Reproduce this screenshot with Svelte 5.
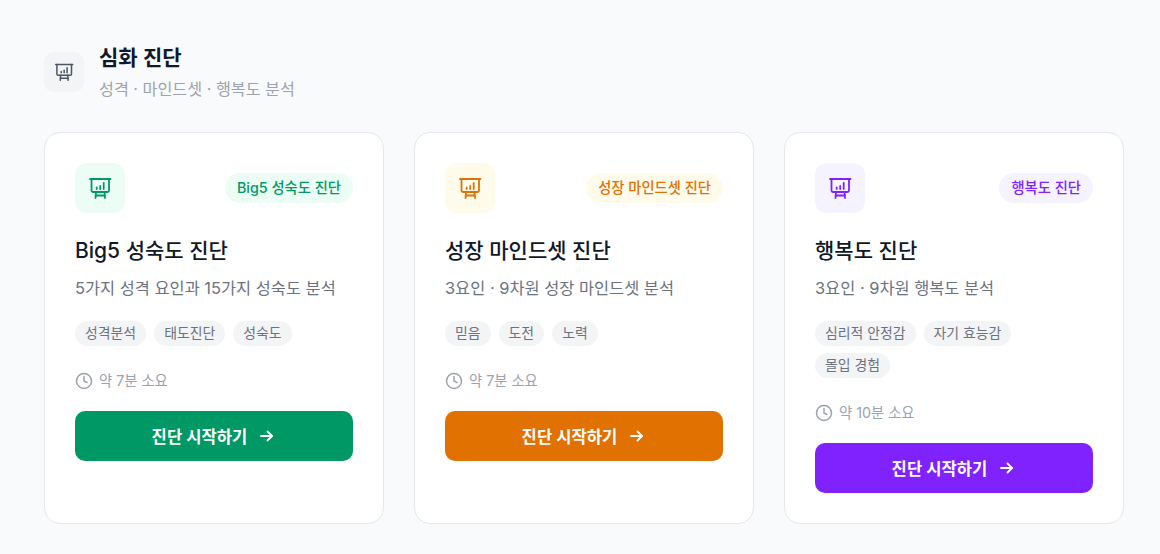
<script>
  const cards = [
    {
      theme: 'green',
      badge: 'Big5 성숙도 진단',
      title: 'Big5 성숙도 진단',
      desc: '5가지 성격 요인과 15가지 성숙도 분석',
      tags: ['성격분석', '태도진단', '성숙도'],
      time: '약 7분 소요'
    },
    {
      theme: 'orange',
      badge: '성장 마인드셋 진단',
      title: '성장 마인드셋 진단',
      desc: '3요인 · 9차원 성장 마인드셋 분석',
      tags: ['믿음', '도전', '노력'],
      time: '약 7분 소요'
    },
    {
      theme: 'purple',
      badge: '행복도 진단',
      title: '행복도 진단',
      desc: '3요인 · 9차원 행복도 분석',
      tags: ['심리적 안정감', '자기 효능감', '몰입 경험'],
      time: '약 10분 소요'
    }
  ];
</script>

{#snippet boardIcon()}
  <svg width="20" height="20" viewBox="0 0 24 24" fill="none" stroke="currentColor" stroke-width="1.8" stroke-linecap="round" stroke-linejoin="round">
    <path d="M2 3h20.5" />
    <path d="M3.5 3v11.5A1.5 1.5 0 0 0 5 16h14.5a1.5 1.5 0 0 0 1.5-1.5V3" />
    <path d="M7.5 22l.5-6" />
    <path d="M17 22l-.5-6" />
    <path d="M7.7 19.5h9" />
    <path d="M8.7 13v-1.5" />
    <path d="M12.2 13v-3" />
    <path d="M15.7 13V7" />
  </svg>
{/snippet}

<div class="page">
  <header class="head">
    <div class="head-icon">{@render boardIcon()}</div>
    <div class="head-text">
      <h2>심화 진단</h2>
      <p>성격 · 마인드셋 · 행복도 분석</p>
    </div>
  </header>

  <div class="grid">
    {#each cards as card}
      <article class="card {card.theme}">
        <div class="top">
          <div class="icon">{@render boardIcon()}</div>
          <span class="badge">{card.badge}</span>
        </div>
        <h3>{card.title}</h3>
        <p class="desc">{card.desc}</p>
        <div class="tags">
          {#each card.tags as tag}
            <span class="tag">{tag}</span>
          {/each}
        </div>
        <div class="time">
          <svg width="18" height="18" viewBox="0 0 24 24" fill="none" stroke="currentColor" stroke-width="2" stroke-linecap="round" stroke-linejoin="round">
            <circle cx="12" cy="12" r="10" />
            <path d="M12 6v6l4 2" />
          </svg>
          <span>{card.time}</span>
        </div>
        <button class="start">
          <span>진단 시작하기</span>
          <svg width="16" height="16" viewBox="0 0 16 16" fill="none" stroke="currentColor" stroke-width="1.8" stroke-linecap="round" stroke-linejoin="round">
            <path d="M1 8h11" />
            <path d="M7.5 3.5L12 8l-4.5 4.5" />
          </svg>
        </button>
      </article>
    {/each}
  </div>
</div>

<style>
  :global(body) {
    background: #f9fafb;
  }
  .page {
    height: 554px;
    box-sizing: border-box;
    padding: 43px 36px 30px 44px;
    background: #f9fafb;
    font-family: Inter, "Noto Sans CJK KR", sans-serif;
    color: #111827;
  }
  .head {
    display: flex;
    align-items: flex-start;
    gap: 15px;
    height: 57px;
    margin-bottom: 32px;
  }
  .head-icon {
    width: 40px;
    height: 40px;
    border-radius: 10px;
    background: #f3f4f6;
    color: #4b5563;
    display: flex;
    align-items: center;
    justify-content: center;
    margin-top: 9px;
  }
  h2 {
    margin: 0;
    font-size: 21px;
    line-height: 30px;
    font-weight: 600;
  }
  .head-text p {
    margin: 3px 0 0;
    font-size: 16.2px;
    line-height: 26px;
    color: #9ca3af;
  }
  .grid {
    display: grid;
    grid-template-columns: repeat(3, 340px);
    gap: 30px;
  }
  .card {
    box-sizing: border-box;
    height: 392px;
    padding: 30px;
    background: #fff;
    border: 1px solid #e5e7eb;
    border-radius: 16px;
  }
  .green { --main: #009966; --soft: #ecfdf5; }
  .orange { --main: #e17100; --soft: #fffbeb; }
  .purple { --main: #7f22fe; --soft: #f5f3ff; }
  .top {
    display: flex;
    align-items: center;
    justify-content: space-between;
    margin-bottom: 20px;
  }
  .icon {
    width: 50px;
    height: 50px;
    border-radius: 12px;
    background: var(--soft);
    color: var(--main);
    display: flex;
    align-items: center;
    justify-content: center;
  }
  .icon svg {
    width: 24px;
    height: 24px;
  }
  .badge {
    padding: 0 12px;
    height: 30px;
    line-height: 30px;
    border-radius: 15px;
    background: var(--soft);
    color: var(--main);
    font-size: 14.3px;
    font-weight: 500;
  }
  h3 {
    margin: 0 0 7px;
    font-size: 21px;
    line-height: 35px;
    font-weight: 500;
  }
  .desc {
    margin: 0 0 20px;
    font-size: 16.4px;
    line-height: 26px;
    color: #6b7280;
  }
  .tags {
    display: flex;
    flex-wrap: wrap;
    gap: 7px 8px;
    margin-bottom: 24px;
  }
  .tag {
    padding: 0 10px;
    height: 25px;
    line-height: 25px;
    border-radius: 13px;
    background: #f3f4f6;
    color: #6b7280;
    font-size: 13.9px;
  }
  .time {
    display: flex;
    align-items: center;
    gap: 6px;
    height: 18px;
    margin-bottom: 23px;
    color: #9ca3af;
    font-size: 14.3px;
  }
  .time svg {
    margin-top: 3px;
  }
  .start {
    width: 100%;
    height: 50px;
    border: none;
    border-radius: 10px;
    background: var(--main);
    color: #fff;
    font-family: inherit;
    font-size: 16.6px;
    font-weight: 600;
    display: flex;
    align-items: center;
    justify-content: center;
    gap: 13px;
  }
</style>
